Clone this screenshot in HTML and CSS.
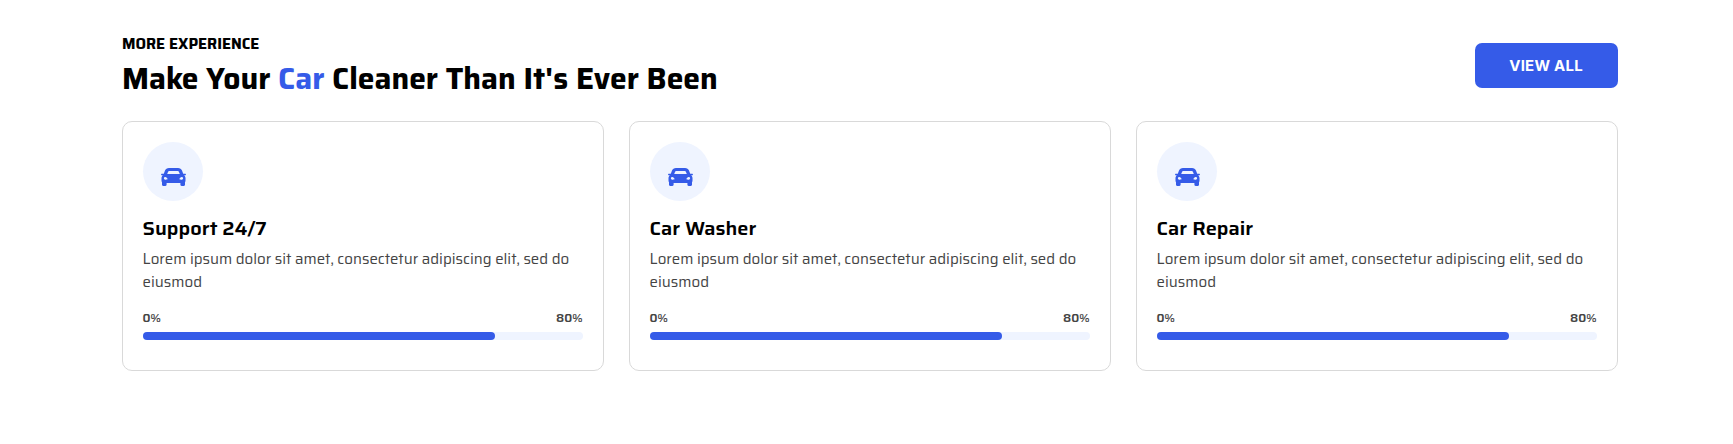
FILE: index.html
```html
<!DOCTYPE html>
<html lang="en">
<head>
    <meta charset="UTF-8">
    <meta name="viewport" content="width=device-width, initial-scale=1.0">
    <title>Car Service</title>
    <link rel="stylesheet" href="styles.css">
</head>
<body>
    <svg class="sprite" width="0" height="0">
        <symbol id="car" viewBox="0 0 25 18">
            <path fill-rule="evenodd" d="M8 0h9c2 0 3.300.9 4 2.600L22.200 5.800h2.200c.4 0 .6.400.5.800l-.1.300c-.1.300-.3.400-.6.400h-1.100c.8.700 1.400 1.700 1.400 2.800v2.400c0 .7-.2 1.300-.5 1.800v2.500c0 .7-.5 1.200-1.200 1.200h-2.200c-.7 0-1.200-.5-1.200-1.200V15H5.600v1.800c0 .7-.5 1.200-1.200 1.200H2.200c-.7 0-1.200-.5-1.200-1.200v-2.500c-.3-.5-.5-1.100-.5-1.800v-2.400c0-1.100.6-2.100 1.400-2.800H.8c-.3 0-.5-.1-.6-.4L.1 6.600C0 6.200.2 5.800.6 5.800h2.200L4 2.600C4.700.9 6 0 8 0zM8.200 3c-.6 0-.9.200-1.100.7L6.200 6h12.600l-.9-2.300c-.2-.5-.5-.7-1.100-.7zM4.300 9C3.400 9 2.900 9.600 2.900 10.300s.5 1.400 1.400 1.400 2.300.1 2.300-.6S5.200 9 4.300 9zm16.400 0c-.9 0-2.300 1.400-2.300 2.100s1.400.6 2.300.6 1.400-.7 1.400-1.400S21.600 9 20.700 9z"/>
        </symbol>
    </svg>

    <section class="services">
        <div class="services-header">
            <div class="heading">
                <h4>MORE EXPERIENCE</h4>
                <h2>Make Your <span>Car</span> Cleaner Than It's Ever Been</h2>
            </div>
            <a href="#" class="btn">VIEW ALL</a>
        </div>

        <div class="cards">
            <div class="card">
                <div class="icon"><svg><use href="#car"/></svg></div>
                <h3>Support 24/7</h3>
                <p>Lorem ipsum dolor sit amet, consectetur adipiscing elit, sed do eiusmod</p>
                <div class="range"><span>0%</span><span>80%</span></div>
                <div class="progress"><div class="bar" style="width: 80%"></div></div>
            </div>
            <div class="card">
                <div class="icon"><svg><use href="#car"/></svg></div>
                <h3>Car Washer</h3>
                <p>Lorem ipsum dolor sit amet, consectetur adipiscing elit, sed do eiusmod</p>
                <div class="range"><span>0%</span><span>80%</span></div>
                <div class="progress"><div class="bar" style="width: 80%"></div></div>
            </div>
            <div class="card">
                <div class="icon"><svg><use href="#car"/></svg></div>
                <h3>Car Repair</h3>
                <p>Lorem ipsum dolor sit amet, consectetur adipiscing elit, sed do eiusmod</p>
                <div class="range"><span>0%</span><span>80%</span></div>
                <div class="progress"><div class="bar" style="width: 80%"></div></div>
            </div>
        </div>
    </section>
</body>
</html>
```
FILE: styles.css
```css
* {
    margin: 0;
    padding: 0;
    box-sizing: border-box;
}
body {
    font-family: 'Saira', 'Roboto', sans-serif;
    background-color: #fff;
    color: #000;
}
.sprite {
    display: block;
}
.services {
    width: 1496px;
    margin-left: 121.6px;
    padding-top: 34px;
}
.services-header {
    display: flex;
    justify-content: space-between;
    align-items: flex-start;
    height: 87px;
}
.heading {
    padding-left: 0.4px;
}
h4 {
    font-size: 15px;
    font-weight: 700;
    line-height: 20px;
}
h2 {
    font-size: 30px;
    font-weight: 700;
    line-height: 36px;
    margin-top: 7px;
}
h2 span {
    color: #355be8;
}
.btn {
    width: 143px;
    height: 45px;
    margin-top: 9px;
    border-radius: 7px;
    background-color: #355be8;
    color: #fff;
    font-family: 'Inter', sans-serif;
    font-size: 15px;
    font-weight: 700;
    letter-spacing: 0.25px;
    line-height: 45px;
    text-align: center;
    text-decoration: none;
}
.cards {
    display: flex;
    gap: 25px;
}
.card {
    flex: 1;
    height: 250px;
    padding: 20px;
    border: 1px solid #d9d9d9;
    border-radius: 10px;
}
.icon {
    width: 60px;
    height: 59px;
    padding: 26px 0 0 18px;
    border-radius: 50%;
    background-color: #eff4ff;
}
.icon svg {
    display: block;
    width: 25px;
    height: 18px;
    fill: #355be8;
}
h3 {
    font-size: 20px;
    font-weight: 600;
    line-height: 26px;
    margin-top: 14px;
}
p {
    color: #444;
    font-size: 15px;
    line-height: 23px;
    margin-top: 7px;
}
.range {
    display: flex;
    justify-content: space-between;
    color: #444;
    font-size: 12px;
    font-weight: 600;
    line-height: 16px;
    margin-top: 16px;
}
.progress {
    height: 8px;
    margin-top: 6px;
    border-radius: 4px;
    background-color: #eff4ff;
}
.bar {
    height: 8px;
    border-radius: 4px;
    background-color: #355be8;
}
```
